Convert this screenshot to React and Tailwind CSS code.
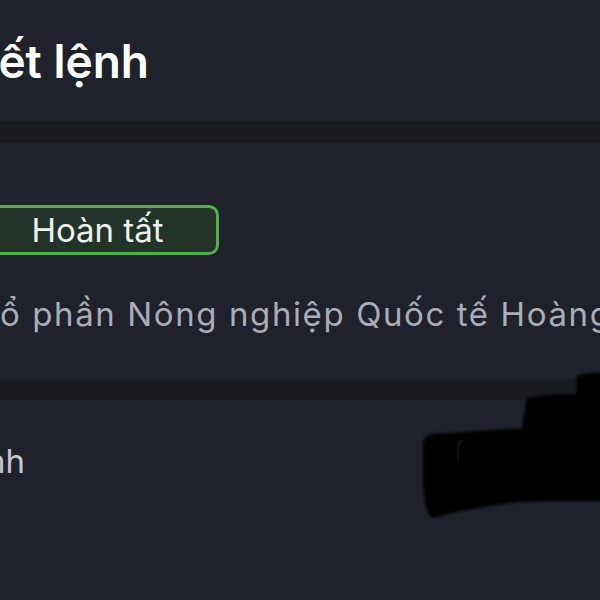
export default function App() {
  const font = { fontFamily: 'Inter, "Noto Sans", sans-serif' };
  return (
    <div className="relative w-[600px] h-[600px] overflow-hidden bg-[#1f222a]" style={font}>
      {/* Header */}
      <div className="h-[121px] pt-[33px]">
        <div className="flex w-[149px] justify-end whitespace-nowrap">
          <span className="shrink-0 text-[46px] leading-[56px] font-semibold text-white">Chi tiết lệnh</span>
        </div>
      </div>
      <div className="h-[22px] bg-[#1a1b20]" />

      {/* Section: status + company */}
      <div className="h-[236px] pt-[62px]">
        <div className="-ml-[24px] flex h-[50px] w-[243px] items-center justify-center rounded-[10px] border-[3px] border-[#4fb04c] bg-[#22332a]">
          <span className="text-[33px] leading-none text-[#eef1ee]">Hoàn tất</span>
        </div>
        <div className="mt-[39px] flex whitespace-nowrap text-[33px] leading-[40px] tracking-[1.6px] text-[#a9adb6]">
          <span className="flex w-0 shrink-0 justify-end">
            <span className="shrink-0">Công ty C</span>
          </span>
          <span className="shrink-0">ổ phần Nông nghiệp Quốc tế Hoàng Anh Gia Lai</span>
        </div>
      </div>
      <div className="h-[21px] bg-[#1a1b20]" />

      {/* Section: channel */}
      <div className="pt-[41px]">
        <div className="flex w-[25px] justify-end whitespace-nowrap">
          <span className="shrink-0 text-[33px] leading-[40px] text-[#c5c8ce]">Kênh</span>
        </div>
      </div>

      {/* Dark obstruction over the content */}
      <svg className="absolute left-0 top-0" width="600" height="600" viewBox="0 0 600 600">
        <defs>
          <filter id="soft" x="-10%" y="-10%" width="120%" height="120%">
            <feGaussianBlur stdDeviation="1.6" />
          </filter>
        </defs>
        <path
          filter="url(#soft)"
          fill="#060606"
          d="M577 376 Q588 372 602 373 L602 501 Q560 500 520 502 Q470 508 432 518 Q424 512 423 480 L423 442 Q425 435 433 434 L522 428 Q524 412 527 398 Q550 393 576 394 Z"
        />
        <path
          fill="none"
          stroke="#2a2f1c"
          strokeWidth="1.2"
          opacity="0.6"
          d="M462 440 Q456 446 458 460"
        />
      </svg>
    </div>
  );
}
